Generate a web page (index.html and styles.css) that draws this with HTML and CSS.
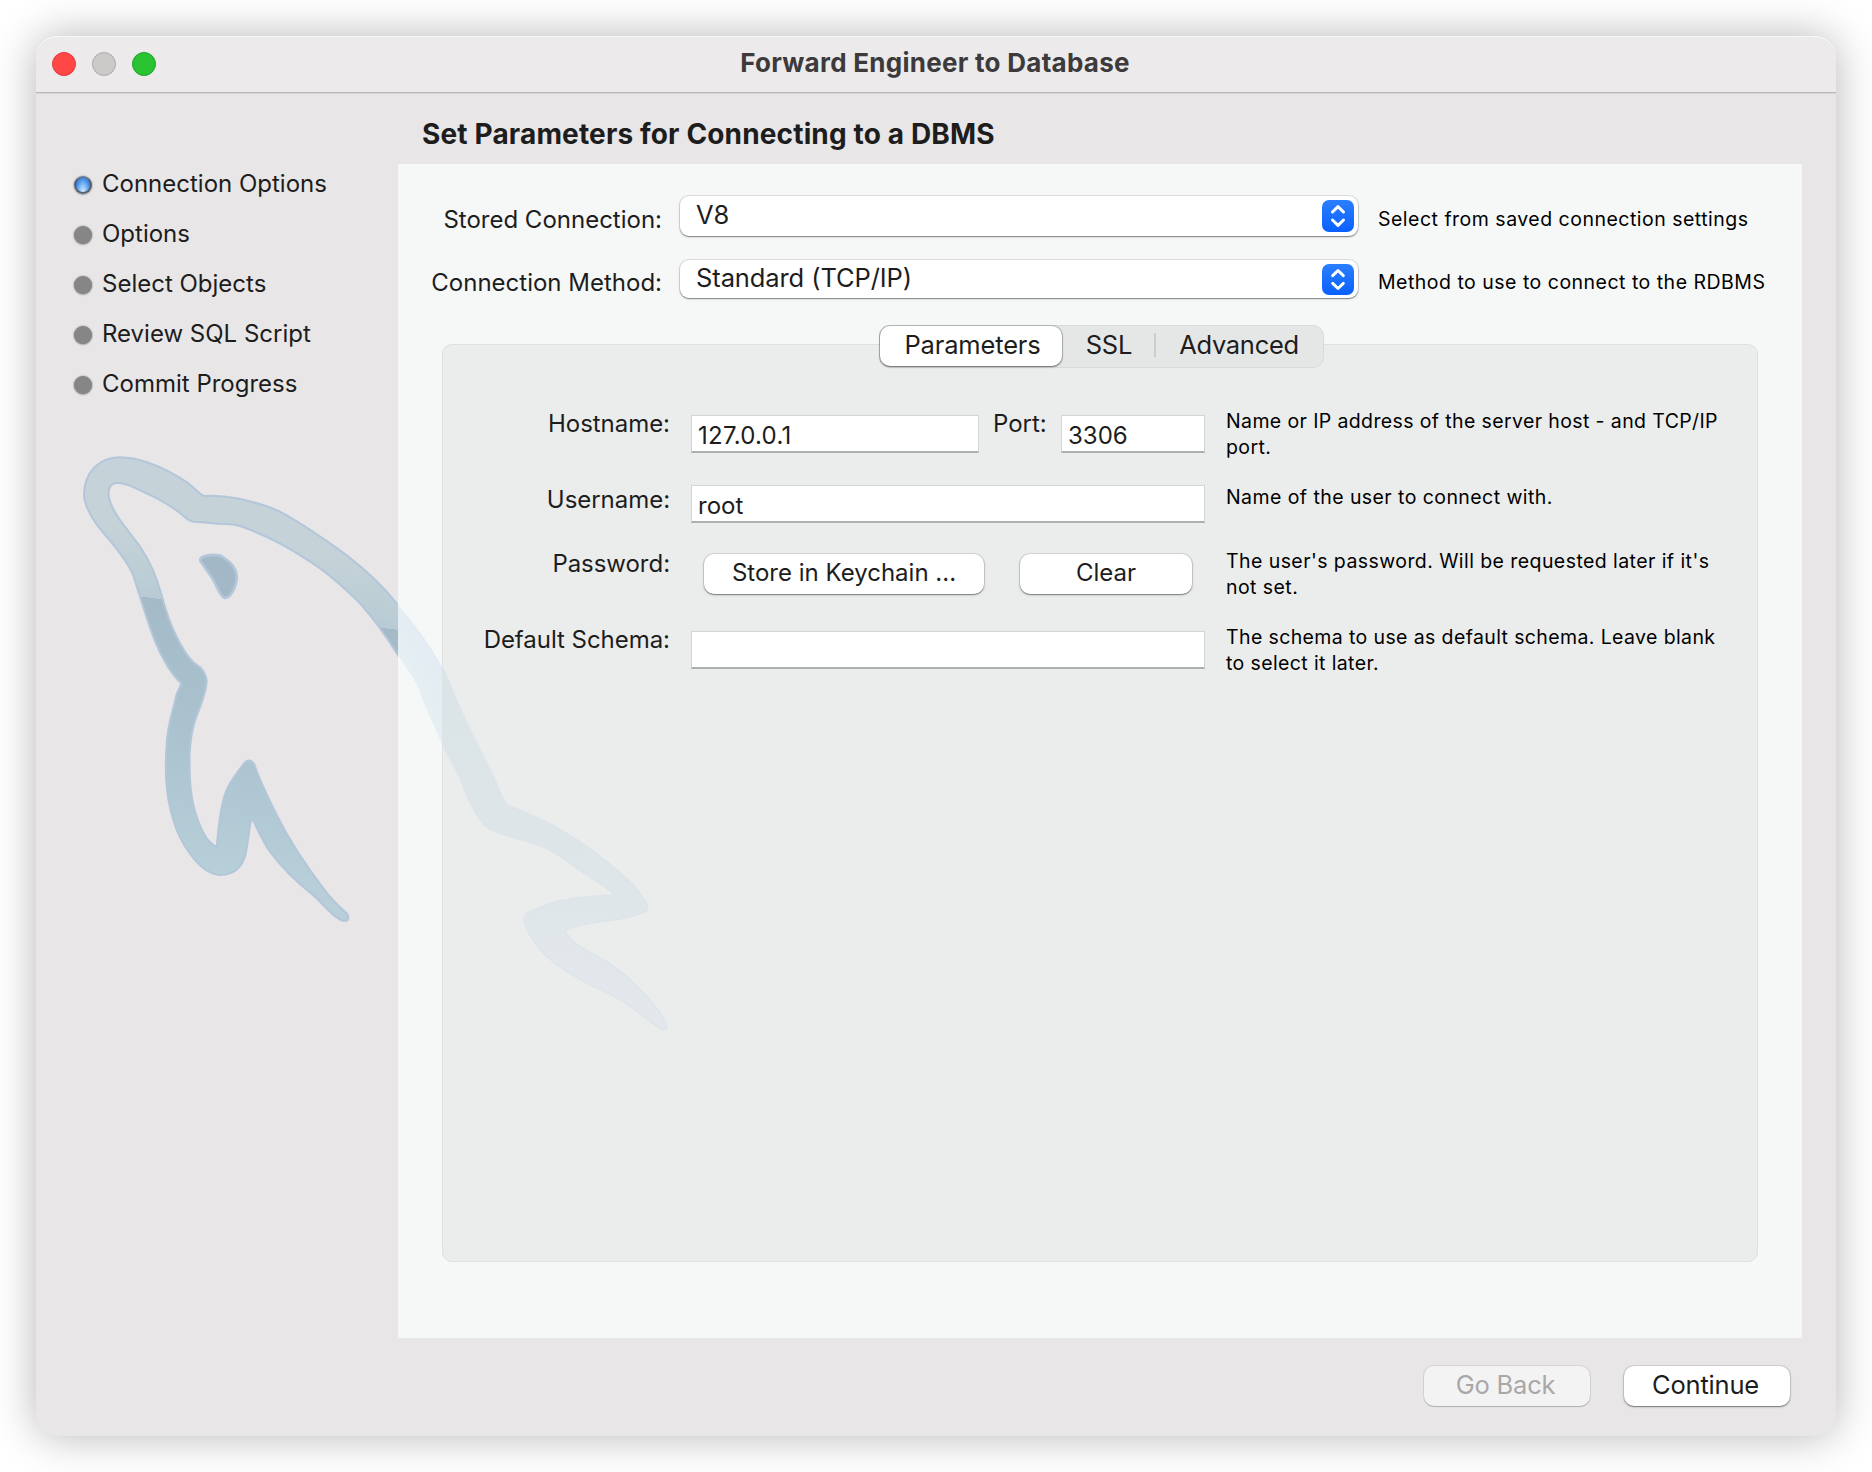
FILE: index.html
```html
<!DOCTYPE html>
<html lang="en">
<head>
<meta charset="utf-8">
<title>Forward Engineer to Database</title>
<link rel="stylesheet" href="styles.css">
</head>
<body>
<div class="window">
  <header class="titlebar">
    <div class="lights"><i class="light close"></i><i class="light minimize"></i><i class="light zoom"></i></div>
    <h1 class="window-title">Forward Engineer to Database</h1>
  </header>
  <div class="body">
    <ol class="steps">
      <li class="step current"><i class="bullet"></i>Connection Options</li>
      <li class="step"><i class="bullet"></i>Options</li>
      <li class="step"><i class="bullet"></i>Select Objects</li>
      <li class="step"><i class="bullet"></i>Review SQL Script</li>
      <li class="step"><i class="bullet"></i>Commit Progress</li>
    </ol>
    <main class="main">
      <h2 class="heading">Set Parameters for Connecting to a DBMS</h2>
      <section class="panel">
        <div class="connection">
          <label class="label">Stored Connection:</label>
          <div class="select"><span>V8</span>
            <svg class="arrows" width="32" height="32" viewBox="0 0 32 32"><path d="M10.5 12 16 6.7l5.5 5.3M10.5 20l5.5 5.3 5.5-5.3"/></svg>
          </div>
          <p class="hint">Select from saved connection settings</p>
          <label class="label">Connection Method:</label>
          <div class="select short"><span>Standard (TCP/IP)</span>
            <svg class="arrows" width="32" height="32" viewBox="0 0 32 32"><path d="M10.5 12 16 6.7l5.5 5.3M10.5 20l5.5 5.3 5.5-5.3"/></svg>
          </div>
          <p class="hint">Method to use to connect to the RDBMS</p>
        </div>
        <div class="group">
          <nav class="tabs">
            <span class="tab active">Parameters</span><span class="tab ssl">SSL</span><span class="tab advanced">Advanced</span>
          </nav>
          <div class="form">
            <label class="label">Hostname:</label>
            <div class="field low"><span class="input host">127.0.0.1</span><label class="port-label">Port:</label><span class="input port">3306</span></div>
            <p class="hint tight">Name or IP address of the server host - and TCP/IP<br>port.</p>
            <label class="label">Username:</label>
            <div class="field high"><span class="input">root</span></div>
            <p class="hint">Name of the user to connect with.</p>
            <label class="label">Password:</label>
            <div class="field buttons"><button class="button store">Store in Keychain ...</button><button class="button clear">Clear</button></div>
            <p class="hint">The user's password. Will be requested later if it's<br>not set.</p>
            <label class="label">Default Schema:</label>
            <div class="field low"><span class="input"></span></div>
            <p class="hint tight">The schema to use as default schema. Leave blank<br>to select it later.</p>
          </div>
        </div>
      </section>
      <footer class="footer">
        <button class="button nav" disabled>Go Back</button>
        <button class="button nav">Continue</button>
      </footer>
    </main>
  </div>
  <svg class="dolphin" width="620" height="600" viewBox="0 0 1860 1800" aria-hidden="true">
    <defs>
      <linearGradient id="skin" gradientUnits="userSpaceOnUse" x1="0" y1="82" x2="-178" y2="1452">
        <stop offset="0" stop-color="#c5d2d9"/>
        <stop offset=".13" stop-color="#c5d3d8"/>
        <stop offset=".277" stop-color="#b8cbd4"/>
        <stop offset=".277" stop-color="#a4bac7"/>
        <stop offset=".6" stop-color="#abc4d0"/>
        <stop offset=".85" stop-color="#b7cfd8"/>
        <stop offset="1" stop-color="#bccddc"/>
      </linearGradient>
      <linearGradient id="tail" gradientUnits="userSpaceOnUse" x1="0" y1="800" x2="0" y2="1800">
        <stop offset="0" stop-color="#dbe4e6"/>
        <stop offset=".6" stop-color="#dfe6e9"/>
        <stop offset="1" stop-color="#e4e8ed"/>
      </linearGradient>
      <linearGradient id="strip" gradientUnits="userSpaceOnUse" x1="1014" y1="700" x2="1146" y2="640">
        <stop offset="0" stop-color="#e6eff2"/>
        <stop offset="1" stop-color="#e2ebf3"/>
      </linearGradient>
      <clipPath id="over-sidebar"><path d="M0 0H1014V1800H0z"/></clipPath>
      <clipPath id="over-panel"><path d="M1014 0H1146V1800H1014z"/></clipPath>
      <clipPath id="over-group"><path d="M1146 0H1860V1830H1146z"/></clipPath>
      <path id="body" d="M72 195C72 130 115 82 180 82C250 82 320 118 380 156C402 172 415 190 432 198C465 196 500 199 530 205C580 215 625 227 665 248C735 286 800 332 860 376C920 422 975 475 1014 525C1070 590 1118 655 1150 718C1172 765 1184 800 1200 835C1235 910 1280 1000 1310 1062Q1330 1115 1342 1126C1390 1145 1440 1164 1490 1192C1565 1235 1645 1295 1710 1355Q1742 1388 1762 1425Q1765 1440 1755 1445C1710 1462 1680 1468 1660 1470C1600 1476 1560 1486 1515 1498Q1520 1517 1540 1535C1570 1560 1610 1577 1640 1595C1700 1632 1755 1690 1800 1748Q1817 1770 1820 1790Q1819 1800 1808 1800C1770 1776 1735 1744 1685 1712C1640 1684 1590 1667 1550 1642C1475 1600 1430 1560 1400 1495Q1392 1480 1392 1465Q1396 1452 1412 1443C1440 1435 1465 1422 1500 1412C1555 1400 1610 1397 1665 1395C1640 1370 1600 1348 1570 1328C1535 1305 1500 1277 1465 1258C1420 1237 1375 1228 1335 1215Q1285 1198 1270 1183C1240 1145 1220 1100 1200 1045C1182 1005 1164 977 1146 942C1120 880 1094 830 1078 782C1064 747 1040 715 1014 676C980 620 940 565 900 520C850 470 800 425 740 388C675 345 605 311 540 288Q520 281 490 282C460 282 430 275 400 275Q387 273 370 257C320 215 260 190 210 167Q188 158 168 158Q140 164 147 205C160 255 205 300 240 350C280 410 290 450 305 495C325 575 350 630 385 680Q400 700 422 713Q440 735 440 755C437 800 415 840 404 875C385 940 388 1000 390 1050C394 1120 412 1180 440 1225Q460 1248 470 1250C476 1200 478 1135 498 1085C510 1052 535 1025 550 1003Q568 980 583 1003C600 1055 625 1105 650 1155C690 1235 740 1310 790 1375Q815 1410 860 1450Q868 1460 863 1470Q852 1476 840 1469C805 1448 785 1415 755 1392C715 1360 670 1320 630 1265C605 1230 590 1190 574 1162C570 1190 565 1220 561 1248Q552 1335 480 1335C420 1333 360 1240 340 1170C315 1090 315 1015 320 940C323 880 345 820 350 792Q358 775 364 760Q345 743 325 712C285 650 262 570 240 500C230 470 225 450 218 432C190 370 140 325 108 280Q74 232 72 195z"/>
    </defs>
    <g clip-path="url(#over-sidebar)"><use href="#body" fill="url(#skin)" stroke="#b3c6da" stroke-width="6"/></g>
    <path d="M421 392C416 380 450 370 482 377C512 395 532 420 530 445C527 478 510 503 494 504C480 500 472 470 460 450C447 427 430 408 421 392z" fill="#a3b8c6" stroke="#b3c6da" stroke-width="8"/>
    <g clip-path="url(#over-panel)"><use href="#body" fill="url(#strip)"/></g>
    <g clip-path="url(#over-group)"><use href="#body" fill="url(#tail)" stroke="#dde4ea" stroke-width="5"/></g>
  </svg>
</div>
</body>
</html>
```
FILE: styles.css
```css
* { box-sizing: border-box; }

body {
  margin: 0;
  padding: 36px;
  height: 1472px;
  overflow: hidden;
  background: #fff;
  font-family: Inter, "Liberation Sans", sans-serif;
  font-size: 24px;
  color: #1d1d1d;
}

h1, h2, p, ol { margin: 0; padding: 0; }

.window {
  position: relative;
  display: flex;
  flex-direction: column;
  width: 1800px;
  height: 1400px;
  border-radius: 21px;
  background: #e8e6e7;
  box-shadow: 0 0 44px rgba(0, 0, 0, .29);
}

.titlebar {
  display: flex;
  align-items: flex-start;
  height: 57px;
  padding-left: 16px;
  border-radius: 21px 21px 0 0;
  border-bottom: 1px solid #b9b7b8;
  background: #eceaeb;
  box-shadow: inset 0 1px 0 #f8f7f7, 0 1px 0 #d8d6d7;
}

.lights { display: flex; gap: 16px; width: 104px; padding-top: 16px; }
.light { width: 24px; height: 24px; border-radius: 50%; border: 1px solid; }
.close { background: #ff4746; border-color: #e0383a; }
.minimize { background: #cccac9; border-color: #adabaa; }
.zoom { background: #29c231; border-color: #1ea527; }

.window-title {
  flex: 1;
  padding-right: 122px;
  text-align: center;
  font-size: 26px;
  font-weight: 700;
  line-height: 53px;
  letter-spacing: .27px;
  color: #3c3a3b;
}

.body { display: flex; flex: 1; }

.steps { width: 362px; padding: 66px 0 0 38px; list-style: none; }
.step { display: flex; align-items: center; gap: 10px; height: 50px; line-height: 50px; }
.bullet {
  width: 18px;
  height: 18px;
  margin-top: 2px;
  border-radius: 50%;
  background: #868686;
  box-shadow: 0 0 2px rgba(0, 0, 0, .4), 0 1px 2px rgba(0, 0, 0, .2);
}
.current .bullet {
  border: 2px solid #56616e;
  border-top-color: #5f7796;
  background: radial-gradient(ellipse at 50% 95%, #d4ecff 0, #86bdf5 35%, #2e7be0 80%, #2a70d4 100%);
}

.main { display: flex; flex-direction: column; width: 1404px; }
.heading {
  height: 71px;
  padding: 11px 0 0 24px;
  font-size: 28px;
  font-weight: 700;
  line-height: 61px;
  letter-spacing: .15px;
}

.panel { height: 1174px; padding-top: 32px; background: #f6f8f7; }

.connection {
  display: grid;
  grid-template-columns: 264px 678px 1fr;
  grid-template-rows: 46px 46px;
  row-gap: 17px;
}
.connection .label { line-height: 48px; }
.connection .hint { padding-left: 38px; line-height: 46px; letter-spacing: .49px; white-space: nowrap; }
.connection .select { margin-left: 18px; margin-right: -18px; }

.label { text-align: right; }
.hint { font-size: 19.5px; line-height: 26px; letter-spacing: .43px; color: #000; }
.tight { letter-spacing: .38px; }

.select {
  display: flex;
  justify-content: space-between;
  height: 40px;
  padding: 4px 4px 0 16px;
  border-radius: 9px;
  background: #fff;
  box-shadow: 0 0 0 1px rgba(0, 0, 0, .09), 0 1px 1px rgba(0, 0, 0, .32), 0 1px 3px rgba(0, 0, 0, .16);
  font-size: 25.5px;
  line-height: 30px;
  letter-spacing: -.1px;
}
.short { height: 38px; margin-top: 1px; line-height: 28px; }

.arrows {
  border-radius: 7px;
  background: linear-gradient(#2a7fff, #0a60ff);
  fill: none;
  stroke: #fff;
  stroke-width: 3;
  stroke-linecap: round;
  stroke-linejoin: round;
}
.short .arrows { height: 31px; }

.group {
  display: flex;
  flex-direction: column;
  width: 1316px;
  height: 918px;
  margin: 39px 0 0 44px;
  border: 1px solid #dfe1e0;
  border-radius: 10px;
  background: #ebedec;
}

.tabs {
  display: flex;
  align-self: center;
  width: 445px;
  height: 43px;
  margin: -20px 0 0 3px;
  border: 1px solid #d9dbda;
  border-radius: 11px;
  background: #e5e7e6;
  font-size: 25.5px;
  line-height: 38px;
  letter-spacing: -.15px;
}
.tab { text-align: center; }
.active {
  width: 182px;
  height: 40px;
  padding-left: 3px;
  border-radius: 10px;
  background: #fff;
  box-shadow: 0 0 0 1px rgba(0, 0, 0, .16), 0 1px 2px rgba(0, 0, 0, .45);
}
.ssl { width: 94px; height: 24px; margin-top: 7px; padding-left: 2px; line-height: 24px; border-right: 2px solid #cccecd; }
.advanced { width: 166px; letter-spacing: -.3px; }

.form {
  display: grid;
  grid-template-columns: 227px 555px 1fr;
  grid-template-rows: 76px 64px 76px 76px;
  padding-top: 40px;
}
.form .label { line-height: 32px; letter-spacing: -.04px; }
.form .hint { padding-left: 1px; }
.field { display: flex; align-items: flex-start; padding: 0 20px 0 21px; }
.low { padding-top: 7px; }
.high { padding-top: 1px; }
.buttons { padding-top: 6px; padding-left: 34px; gap: 36px; }

.input {
  flex: 1;
  height: 38px;
  padding: 2px 0 0 6px;
  border: 1px solid #d4d6d5;
  border-bottom: 2px solid #aeb0af;
  background: #fff;
  line-height: 35px;
}
.host { flex: none; width: 288px; letter-spacing: .25px; }
.port { flex: none; width: 144px; }
.port-label { width: 82px; padding-left: 14px; line-height: 32px; margin-top: -7px; }

.button {
  height: 40px;
  padding: 0;
  border: 0;
  border-radius: 10px;
  background: #fff;
  box-shadow: 0 0 0 1px rgba(0, 0, 0, .09), 0 1px 1px rgba(0, 0, 0, .3), 0 1px 3px rgba(0, 0, 0, .18);
  font: 24px/38px Inter, "Liberation Sans", sans-serif;
  color: #1d1d1d;
}
.store, .clear { padding-bottom: 2px; }
.store { width: 280px; }
.clear { width: 172px; }

.footer { display: flex; justify-content: flex-end; gap: 34px; padding: 28px 12px 0 0; }
.nav { width: 166px; padding: 0 3px 3px 0; font-size: 25.5px; line-height: 37px; letter-spacing: -.2px; }
.nav:disabled { background: #f3f3f3; color: #a9a8a8; box-shadow: 0 0 0 1px rgba(0, 0, 0, .07), 0 1px 1px rgba(0, 0, 0, .18); }

.dolphin { position: absolute; left: 24px; top: 394px; overflow: visible; pointer-events: none; }
```
